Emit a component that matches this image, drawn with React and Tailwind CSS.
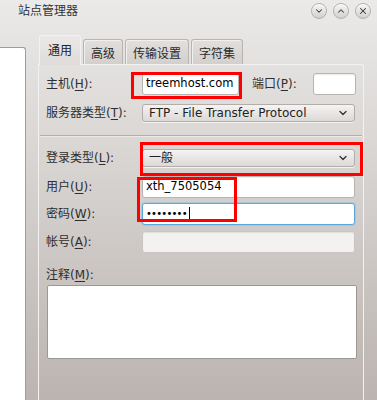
import { ChevronDown, ChevronUp, X } from "lucide-react";

const FONT = "font-['DejaVu_Sans','Noto_Sans_CJK_SC',sans-serif]";

function Label({ text, k, className = "" }) {
  return (
    <span className={`text-[12px] leading-none text-[#2e2e2e] whitespace-nowrap ${className}`}>
      {text}(<span className="underline underline-offset-2">{k}</span>):
    </span>
  );
}

function WinBtn({ children }) {
  return (
    <div className="w-[16px] h-[16px] rounded-full border border-[#b3afab] bg-gradient-to-b from-[#f7f6f5] to-[#d3cfcc] flex items-center justify-center text-[#3a3a3a] shadow-[inset_0_1px_0_#fff]">
      {children}
    </div>
  );
}

function Input({ className = "", children }) {
  return (
    <div
      className={`h-[22px] rounded-[3px] border border-[#b9b4b0] bg-white flex items-center pl-[3px] text-[11.5px] text-black shadow-[inset_0_1px_1px_rgba(0,0,0,0.08)] ${className}`}
    >
      {children}
    </div>
  );
}

function Select({ text, className = "" }) {
  return (
    <div
      className={`h-[18px] w-[213px] rounded-[3px] border border-[#b2ada9] bg-gradient-to-b from-[#f5f4f3] to-[#dcd9d6] flex items-center justify-between pl-[6px] pr-[5px] text-[12px] text-[#222] shadow-[0_1px_0_rgba(255,255,255,0.7)] ${className}`}
    >
      <span className="leading-none">{text}</span>
      <ChevronDown size={12} strokeWidth={2.6} className="text-[#333]" />
    </div>
  );
}

function Tab({ text, active }) {
  return active ? (
    <div className="h-[30px] px-[8px] pt-[6px] rounded-t-[3px] border border-b-0 border-[#f4f2f0] bg-gradient-to-b from-[#ebe9e7] to-[#dedbd9] text-[12px] text-[#222] relative top-[1px]">
      {text}
    </div>
  ) : (
    <div className="h-[25px] px-[7px] pt-[5px] rounded-t-[3px] border border-b-0 border-[#b9b4b0] shadow-[inset_1px_1px_0_#f2f0ee] bg-gradient-to-b from-[#e2dfdd] to-[#d3cfcc] text-[12px] text-[#2a2a2a]">
      {text}
    </div>
  );
}

export default function App() {
  return (
    <div className={`relative w-[377px] h-[400px] overflow-hidden bg-gradient-to-b from-[#ebeae9] via-[#d3cfcc] to-[#bbb4b0] ${FONT}`}>
      {/* title bar */}
      <div className="h-[20px] flex items-center justify-between pl-[18px] pr-[6px] pt-[2px]">
        <span className="text-[12px] text-[#333] leading-none">站点管理器</span>
        <div className="flex items-center gap-[6px]">
          <WinBtn><ChevronDown size={10} strokeWidth={2.5} /></WinBtn>
          <WinBtn><ChevronUp size={10} strokeWidth={2.5} /></WinBtn>
          <WinBtn><X size={10} strokeWidth={2.5} /></WinBtn>
        </div>
      </div>

      <div className="flex h-[380px]">
        {/* site tree pane */}
        <div className="w-[26px] mt-[27px] bg-white border-t border-r border-[#a19c98] rounded-tr-[3px]" />

        {/* tab widget */}
        <div className="ml-[12px] w-[326px] mt-[14px] flex flex-col">
          <div className="flex items-end gap-[2px] pl-[1px] h-[30px]">
            <Tab text="通用" active />
            <Tab text="高级" />
            <Tab text="传输设置" />
            <Tab text="字符集" />
          </div>
          <div className="flex-1 border border-b-0 border-[#f4f2f0] rounded-tr-[3px] pl-[7px] pr-[7px] pt-[8px]">
            {/* host / port */}
            <div className="flex items-center h-[22px]">
              <Label text="主机" k="H" className="w-[96px]" />
              <Input className="w-[97px]">treemhost.com</Input>
              <Label text="端口" k="P" className="ml-[13px]" />
              <Input className="w-[43px] ml-auto" />
            </div>
            {/* server type */}
            <div className="flex items-center h-[18px] mt-[9px]">
              <Label text="服务器类型" k="T" className="w-[96px]" />
              <Select text="FTP - File Transfer Protocol" />
            </div>

            <div className="mt-[13px] h-[2px] -mx-[6px] border-t border-[#b3aeaa] border-b border-b-[#ece9e7]" />

            {/* login type */}
            <div className="flex items-center h-[18px] mt-[12px]">
              <Label text="登录类型" k="L" className="w-[96px]" />
              <Select text="一般" />
            </div>
            {/* user */}
            <div className="flex items-center h-[21px] mt-[9px]">
              <Label text="用户" k="U" className="w-[96px]" />
              <Input className="w-[213px] h-[21px]">xth_7505054</Input>
            </div>
            {/* password */}
            <div className="flex items-center h-[22px] mt-[6px]">
              <Label text="密码" k="W" className="w-[96px]" />
              <div className="w-[213px] h-[22px] rounded-[3px] border border-[#5aa9de] bg-white flex items-center pl-[3px] shadow-[0_0_0_1px_rgba(120,190,235,0.45)]">
                <span className="text-[10px] leading-none tracking-[-0.8px] text-black">••••••••</span>
                <span className="ml-[2px] w-[1px] h-[15px] bg-black" />
              </div>
            </div>
            {/* account */}
            <div className="flex items-center h-[22px] mt-[6px]">
              <Label text="帐号" k="A" className="w-[96px]" />
              <Input className="w-[213px] !bg-[#f3f2f1] border-[#c9c5c2]" />
            </div>
            {/* comment */}
            <div className="mt-[15px] h-[14px] flex items-center">
              <Label text="注释" k="M" />
            </div>
            <div className="mt-[3px] ml-[1px] w-[310px] h-[74px] bg-white border border-[#9d9894] rounded-[2px]" />
          </div>
        </div>
      </div>

      {/* red annotation boxes */}
      <div className="absolute left-[131px] top-[72px] w-[111px] h-[27px] border-[3px] border-[#f00]" />
      <div className="absolute left-[140px] top-[142px] w-[223px] h-[34px] border-[3px] border-[#f00]" />
      <div className="absolute left-[137px] top-[177px] w-[100px] h-[45px] border-[3px] border-[#f00]" />
    </div>
  );
}
